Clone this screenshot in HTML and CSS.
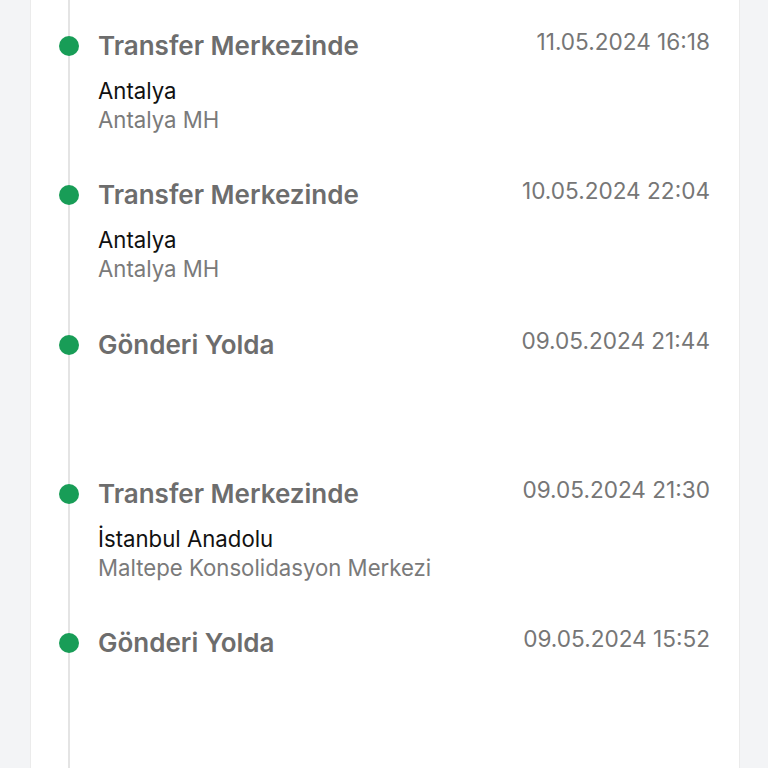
FILE: index.html
```html
<!DOCTYPE html>
<html lang="tr">

<head>
  <meta charset="UTF-8">
  <title>Gönderi Hareketleri</title>
  <link rel="stylesheet" href="styles.css">
</head>

<body>
  <div class="card">
    <div class="timeline">
      <div class="event">
        <span class="dot"></span>
        <div class="event-head">
          <div class="event-title">Transfer Merkezinde</div>
          <div class="event-date">11.05.2024 16:18</div>
        </div>
        <div class="event-place">Antalya</div>
        <div class="event-unit">Antalya MH</div>
      </div>
      <div class="event">
        <span class="dot"></span>
        <div class="event-head">
          <div class="event-title">Transfer Merkezinde</div>
          <div class="event-date">10.05.2024 22:04</div>
        </div>
        <div class="event-place">Antalya</div>
        <div class="event-unit">Antalya MH</div>
      </div>
      <div class="event">
        <span class="dot"></span>
        <div class="event-head">
          <div class="event-title">Gönderi Yolda</div>
          <div class="event-date">09.05.2024 21:44</div>
        </div>
      </div>
      <div class="event">
        <span class="dot"></span>
        <div class="event-head">
          <div class="event-title">Transfer Merkezinde</div>
          <div class="event-date">09.05.2024 21:30</div>
        </div>
        <div class="event-place">İstanbul Anadolu</div>
        <div class="event-unit">Maltepe Konsolidasyon Merkezi</div>
      </div>
      <div class="event">
        <span class="dot"></span>
        <div class="event-head">
          <div class="event-title">Gönderi Yolda</div>
          <div class="event-date">09.05.2024 15:52</div>
        </div>
      </div>
    </div>
  </div>
</body>

</html>
```

FILE: styles.css
```css
body {
  margin: 0;
  background-color: #f3f4f6;
  font-family: Inter, "Noto Sans", sans-serif;
}

.card {
  margin-left: 30px;
  width: 710px;
  min-height: 768px;
  background-color: #fff;
  border-left: 1px solid #ebebeb;
  border-right: 1px solid #ebebeb;
  box-sizing: border-box;
  padding-right: 29px;
}

.timeline {
  margin-left: 37px;
  min-height: 768px;
  padding-top: 31px;
  border-left: 2px solid #e4e4e4;
  box-sizing: border-box;
}

.event {
  position: relative;
  height: 149.3px;
  padding-left: 28px;
  box-sizing: border-box;
}

.dot {
  position: absolute;
  left: -11px;
  top: 5px;
  width: 20px;
  height: 20px;
  border-radius: 50%;
  background-color: #189d57;
}

.event-head {
  display: flex;
  justify-content: space-between;
  align-items: flex-start;
}

.event-title {
  font-size: 26px;
  line-height: 30px;
  font-weight: 600;
  color: #6d6d6d;
}

.event-date {
  font-size: 22.6px;
  line-height: 22px;
  color: #767676;
}

.event-place {
  margin-top: 15px;
  font-size: 22.2px;
  line-height: 29px;
  color: #111;
}

.event-unit {
  font-size: 22.2px;
  line-height: 29px;
  color: #7a7a7a;
}
```
